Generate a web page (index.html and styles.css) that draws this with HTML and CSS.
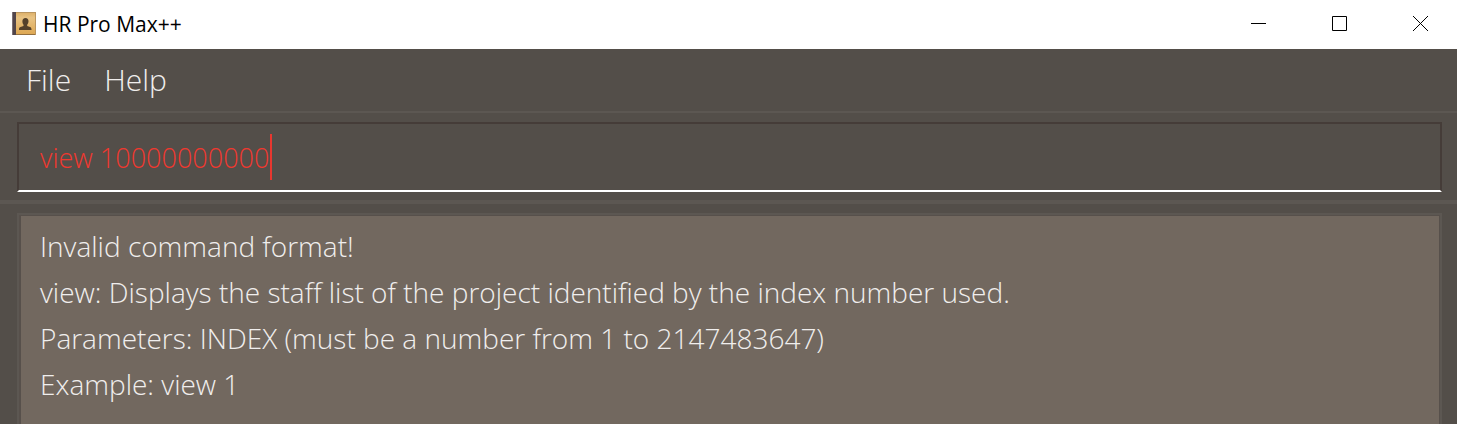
FILE: index.html
```html
<!DOCTYPE html>
<html lang="en">
<head>
<meta charset="utf-8">
<meta name="viewport" content="width=device-width, initial-scale=1">
<title>HR Pro Max++</title>
<link rel="stylesheet" href="styles.css">
</head>
<body>
<header class="titlebar">
  <svg class="app-icon" viewBox="0 0 26 26" aria-hidden="true">
    <defs>
      <linearGradient id="cover" x1="0" y1="0" x2="0" y2="1">
        <stop offset="0" stop-color="#dcae66"/>
        <stop offset="0.250" stop-color="#e8c384"/>
        <stop offset="1" stop-color="#dda650"/>
      </linearGradient>
    </defs>
    <rect x="1" y="0" width="24" height="23" rx="1" fill="url(#cover)"/>
    <path d="M1 22.500h24" stroke="#94703f"/>
    <path d="M1 .5h24M24.500 0v23" stroke="#b99560"/>
    <path d="M1 0h4v23H1z" fill="#51454a"/>
    <path d="M1.500 0v23" stroke="#7b7074"/>
    <path d="M14.500 6c2 0 3 1.400 3 3.300 0 1.500-.6 2.700-1.300 3.400v1.300c1.800.6 4.300.8 4.300 3.200v.8H8v-.8c0-2.400 2.700-2.600 4.500-3.200v-1.300c-.7-.7-1.100-1.900-1.100-3.400C11.400 7.400 12.500 6 14.500 6z" fill="#54402a"/>
  </svg>
  <h1 class="title">HR Pro Max++</h1>
  <div class="window-controls">
    <button class="window-button" aria-label="Minimize"><svg viewBox="0 0 15 15"><path d="M0 7.500h15"/></svg></button>
    <button class="window-button" aria-label="Maximize"><svg viewBox="0 0 15 15"><path d="M.5.5h14v14H.5z"/></svg></button>
    <button class="window-button" aria-label="Close"><svg viewBox="0 0 15 15"><path d="M0 0l15 15M15 0L0 15"/></svg></button>
  </div>
</header>
<nav class="menubar">
  <button class="menu">File</button>
  <button class="menu">Help</button>
</nav>
<main>
  <form class="command-pane">
    <div class="command-field">
      <input class="command-input" type="text" aria-label="Command" value="view 10000000000" spellcheck="false" autocomplete="off">
      <div class="caret-layer" aria-hidden="true"><span class="caret"></span></div>
    </div>
  </form>
  <section class="result-pane">
    <output class="result">Invalid command format!
view: Displays the staff list of the project identified by the index number used.
Parameters: INDEX (must be a number from 1 to 2147483647)
Example: view 1</output>
  </section>
</main>
</body>
</html>
```
FILE: styles.css
```css
* {
  box-sizing: border-box;
}

html,
body {
  height: 100%;
}

body {
  margin: 0;
  display: flex;
  flex-direction: column;
  overflow: hidden;
  background: #534e49;
  color: #f0eeed;
  font-family: "Open Sans", "Noto Sans", sans-serif;
  font-weight: 300;
}

button,
input {
  margin: 0;
  padding: 0;
  border: 0;
  background: none;
  color: inherit;
  font: inherit;
}

.titlebar {
  display: flex;
  align-items: center;
  flex: none;
  height: 49px;
  padding-left: 11px;
  background: #fff;
  color: #000;
}

.app-icon {
  width: 26px;
  height: 26px;
  margin-right: 6px;
}

.title {
  flex: 1;
  margin: 0;
  padding-bottom: 2px;
  font-size: 21px;
  font-weight: 400;
  line-height: 28px;
}

.window-controls {
  display: flex;
  align-self: stretch;
}

.window-button {
  display: grid;
  place-items: center;
  width: 81px;
  padding: 0 0 2px 8px;
}

.window-button svg {
  width: 15px;
  height: 15px;
  fill: none;
  stroke: #000;
}

.menubar {
  display: flex;
  flex: none;
  gap: 33px;
  height: 64px;
  padding: 0 26px 2px;
  border-bottom: 2px solid #5c5752;
}

.menu {
  font-size: 30px;
}

main {
  display: flex;
  flex: 1;
  flex-direction: column;
  min-height: 0;
}

.command-pane {
  flex: none;
  padding: 9px 15px 8px 17px;
  border-bottom: 4px solid #5c5752;
}

.command-field {
  position: relative;
  border: 2px solid #453c38;
  border-bottom-color: #fff;
  font-size: 27px;
  line-height: 46px;
}

.command-input {
  display: block;
  width: 100%;
  height: 66px;
  padding: 0 21px;
  color: #f0382f;
  outline: none;
}

.caret-layer {
  position: absolute;
  top: 10px;
  left: 251px;
  pointer-events: none;
}

.caret {
  display: block;
  width: 2px;
  height: 46px;
  background: #e8372f;
}

.result-pane {
  flex: 1;
  margin: 9px 15px 0 17px;
  padding: 8px 21px;
  border: 2px solid #5c5752;
  border-bottom: 0;
  background: #72685f;
  box-shadow: inset 2px 1px #57504b, inset -1px 0 #57504b;
}

.result {
  display: block;
  font-size: 28px;
  line-height: 46px;
  white-space: pre-wrap;
}
```
